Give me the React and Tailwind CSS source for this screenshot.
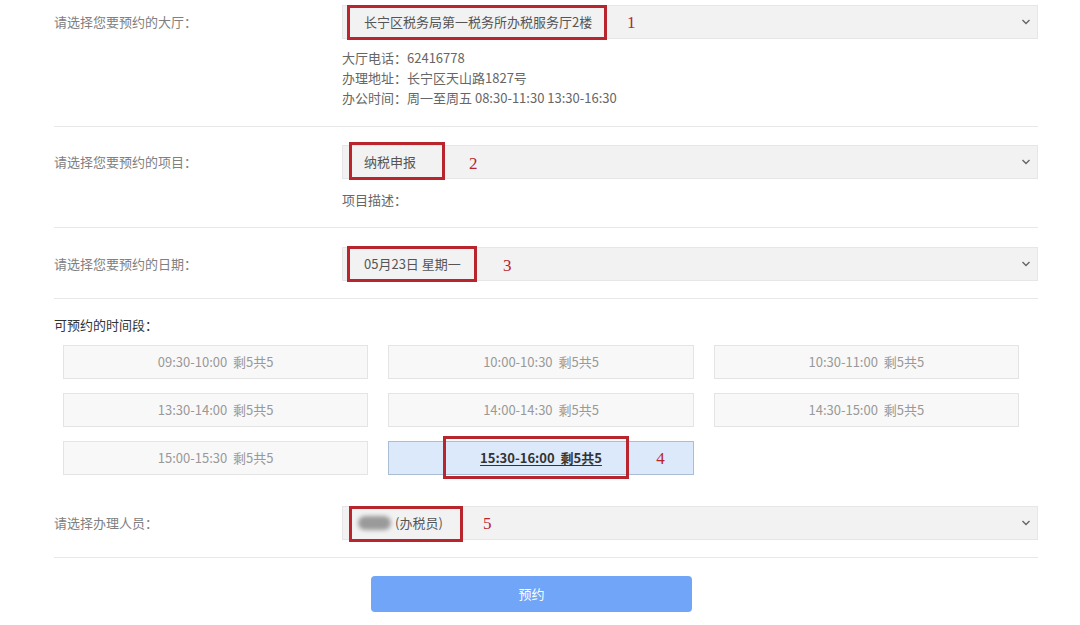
import React from "react";

const FONT = { fontFamily: '"Microsoft YaHei","Noto Sans CJK SC","Noto Sans",sans-serif' };

function Chevron() {
  return (
    <svg width="10" height="7" viewBox="0 0 10 7" className="absolute right-[6px] top-1/2 -translate-y-1/2">
      <path d="M1.5 1.5 L5 5 L8.5 1.5" fill="none" stroke="#666" strokeWidth="1.4" />
    </svg>
  );
}

function Mark({ className }) {
  return <div className={`absolute border-[3px] border-[#b8252d] ${className}`} />;
}

function Num({ n, className }) {
  return (
    <span
      className={`absolute text-[17px] text-[#b8252d] leading-none ${className}`}
      style={{ fontFamily: '"Liberation Serif","Times New Roman",serif' }}
    >
      {n}
    </span>
  );
}

function Select({ children, mark, num }) {
  return (
    <div className="relative h-[34px] w-full shrink-0 bg-[#f2f2f2] border border-[#e6e6e6] flex items-center pl-[21px] text-[13px] text-[#555]">
      {children}
      <Chevron />
      {mark}
      {num}
    </div>
  );
}

function Row({ label, children, className = "" }) {
  return (
    <div className={`flex ${className}`}>
      <div className="w-[288px] shrink-0 h-[34px] flex items-center text-[13px] text-[#808080]">{label}</div>
      <div className="flex-1 flex flex-col">{children}</div>
    </div>
  );
}

const slots = [
  "09:30-10:00",
  "10:00-10:30",
  "10:30-11:00",
  "13:30-14:00",
  "14:00-14:30",
  "14:30-15:00",
  "15:00-15:30",
];

export default function App() {
  return (
    <div className="w-[1080px] h-[625px] bg-white overflow-hidden" style={FONT}>
      <div className="ml-[54px] w-[984px] pt-[5px]">
        {/* Row 1 */}
        <Row label="请选择您要预约的大厅：" className="pb-[18px] border-b border-[#e8e8e8]">
          <Select
            mark={<Mark className="left-[4px] -top-[1px] w-[260px] h-[35px]" />}
            num={<Num n="1" className="left-[284px] top-[8px]" />}
          >
            长宁区税务局第一税务所办税服务厅2楼
          </Select>
          <div className="mt-[9px] text-[13px] leading-[20px] text-[#666]">
            <div>大厅电话：62416778</div>
            <div>办理地址：长宁区天山路1827号</div>
            <div>办公时间：周一至周五 08:30-11:30 13:30-16:30</div>
          </div>
        </Row>

        {/* Row 2 */}
        <Row label="请选择您要预约的项目：" className="pt-[18px] pb-[17px] border-b border-[#e8e8e8]">
          <Select
            mark={<Mark className="left-[6px] -top-[4px] w-[96px] h-[38px]" />}
            num={<Num n="2" className="left-[126px] top-[9px]" />}
          >
            纳税申报
          </Select>
          <div className="mt-[11px] text-[13px] leading-[20px] text-[#666]">项目描述：</div>
        </Row>

        {/* Row 3 */}
        <Row label="请选择您要预约的日期：" className="pt-[19px] pb-[17px] border-b border-[#e8e8e8]">
          <Select
            mark={<Mark className="left-[4px] -top-[2px] w-[130px] h-[36px]" />}
            num={<Num n="3" className="left-[160px] top-[9px]" />}
          >
            05月23日 星期一
          </Select>
        </Row>

        {/* Time slots */}
        <div className="pt-[16px] text-[13px] leading-[20px] text-[#333]">可预约的时间段：</div>
        <div className="ml-[9px] w-[956px] mt-[10px] grid grid-cols-3 gap-x-[20px] gap-y-[14px]">
          {slots.map((s) => (
            <div
              key={s}
              className="h-[34px] bg-[#f8f8f8] border border-[#e4e4e4] flex items-center justify-center text-[13px] text-[#999]"
            >
              {s}&nbsp;&nbsp;剩5共5
            </div>
          ))}
          <div className="relative h-[34px] bg-[#dce9fb] border border-[#a9bdd4] flex items-center justify-center text-[13px] text-[#333] font-bold underline underline-offset-2">
            15:30-16:00&nbsp;&nbsp;剩5共5
            <Mark className="left-[54px] -top-[6px] w-[186px] h-[43px]" />
            <Num n="4" className="left-[267px] top-[8px] font-normal no-underline" />
          </div>
        </div>

        {/* Row 5 */}
        <Row label="请选择办理人员：" className="pt-[31px] pb-[17px] border-b border-[#e8e8e8]">
          <Select
            mark={<Mark className="left-[6px] -top-[1px] w-[114px] h-[36px]" />}
            num={<Num n="5" className="left-[140px] top-[8px]" />}
          >
            <span className="inline-block w-[33px] h-[14px] rounded-full bg-[#9a9a9a] blur-[2px] -ml-[6px] mr-[4px]" />
            <span className="text-[#555]">(办税员)</span>
          </Select>
        </Row>

        {/* Button */}
        <div className="pt-[18px] pl-[317px]">
          <button className="w-[321px] h-[36px] rounded-[4px] bg-[#70a5f8] text-white text-[13px] flex items-center justify-center">
            预约
          </button>
        </div>
      </div>
    </div>
  );
}
